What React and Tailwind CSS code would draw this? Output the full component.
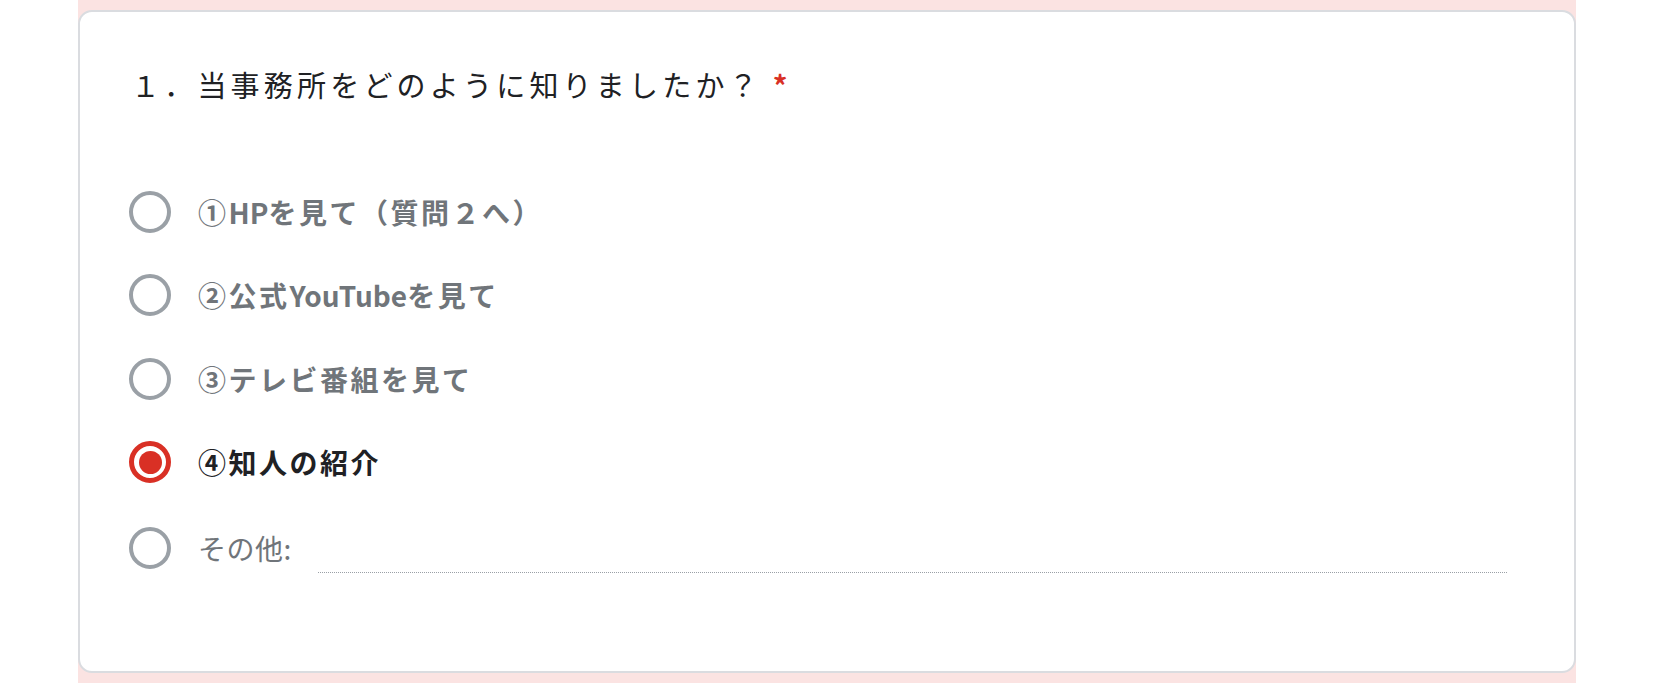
export default function App() {
  const font = { fontFamily: '"Noto Sans CJK JP", "Noto Sans", sans-serif' };
  const options = [
    { label: ["①", "HP", "を見て（質問２へ）"], selected: false },
    { label: ["②公式", "YouTube", "を見て"], selected: false },
    { label: ["③テレビ番組を見て"], selected: false },
    { label: ["④知人の紹介"], selected: true },
  ];
  return (
    <div className="w-[1654px] h-[683px] bg-white flex justify-center" style={font}>
      <div className="w-[1498px] h-[683px] bg-[#fbe3e2] pt-[10px] pb-[10px]">
        <div className="h-[663px] bg-white border-2 border-[#dadce0] rounded-[14px] flex flex-col">
          <div className="pt-[44px] pl-[51px] h-[100px] flex items-center text-[29px] leading-[56px] text-[#202124]">
            <span className="tracking-[4.2px]">１．当事務所をどのように知りましたか？</span>
            <span className="ml-[11px] text-[#d93025] font-bold">*</span>
          </div>
          <div className="mt-[58px] flex flex-col">
            {options.map((o, i) => (
              <div key={i} className="h-[83.5px] flex items-center pl-[49px]">
                {o.selected ? (
                  <div className="w-[42px] h-[42px] rounded-full border-[5px] border-[#d93025] flex items-center justify-center shrink-0">
                    <div className="w-[23px] h-[23px] rounded-full bg-[#d93025]" />
                  </div>
                ) : (
                  <div className="w-[42px] h-[42px] rounded-full border-[4px] border-[#9aa0a6] shrink-0" />
                )}
                <span
                  className={
                    "ml-[27px] text-[28px] tracking-[2.5px] font-bold " +
                    (o.selected ? "text-[#202124]" : "text-[#70757a]")
                  }
                >
                  {o.label.map((part, j) =>
                    j === 1 ? (
                      <span key={j} className="tracking-normal">{part}</span>
                    ) : (
                      <span key={j}>{part}</span>
                    )
                  )}
                </span>
              </div>
            ))}
            <div className="h-[88px] flex items-center pl-[49px] pr-[67px]">
              <div className="w-[42px] h-[42px] rounded-full border-[4px] border-[#9aa0a6] shrink-0" />
              <span className="ml-[27px] text-[28px] tracking-[0.5px] text-[#70757a]">その他:</span>
              <div className="ml-[26px] flex-1 h-[50px] border-b border-dotted border-[#9aa0a6]" />
            </div>
          </div>
        </div>
      </div>
    </div>
  );
}
